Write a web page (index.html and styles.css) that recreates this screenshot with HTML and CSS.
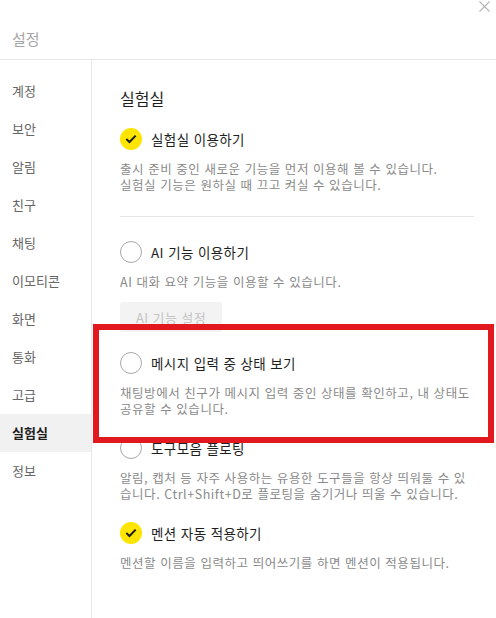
FILE: index.html
```html
<!DOCTYPE html>
<html lang="ko">
<head>
    <meta charset="UTF-8">
    <meta name="viewport" content="width=device-width, initial-scale=1.0">
    <title>설정</title>
    <link rel="stylesheet" href="styles.css">
</head>
<body>
    <div id="settings">
        <div class="header">
            <div class="closeRow">
                <svg class="closeIcon" width="11" height="11" viewBox="0 0 11 11">
                    <path d="M0.5 0.5 L10.5 10.5 M10.5 0.5 L0.5 10.5" stroke="#b4b4b4" stroke-width="1.1" fill="none"/>
                </svg>
            </div>
            <div class="title">설정</div>
        </div>
        <div class="main">
            <ul class="menu">
                <li>계정</li>
                <li>보안</li>
                <li>알림</li>
                <li>친구</li>
                <li>채팅</li>
                <li>이모티콘</li>
                <li>화면</li>
                <li>통화</li>
                <li>고급</li>
                <li class="active">실험실</li>
                <li>정보</li>
            </ul>
            <div class="content">
                <h2 class="pageTitle">실험실</h2>

                <div class="option first">
                    <span class="check on">
                        <svg width="12" height="10" viewBox="0 0 12 10"><path d="M1.3 5 L4.5 8 L10.7 1.6" stroke="#1e1e1e" stroke-width="2" fill="none"/></svg>
                    </span>
                    <span class="label">실험실 이용하기</span>
                </div>
                <p class="desc">출시 준비 중인 새로운 기능을 먼저 이용해 볼 수 있습니다.<br>실험실 기능은 원하실 때 끄고 켜실 수 있습니다.</p>

                <div class="divider"></div>

                <div class="option afterDivider">
                    <span class="check"></span>
                    <span class="label">AI 기능 이용하기</span>
                </div>
                <p class="desc">AI 대화 요약 기능을 이용할 수 있습니다.</p>
                <button class="subButton" disabled>AI 기능 설정</button>

                <div class="option">
                    <span class="check"></span>
                    <span class="label">메시지 입력 중 상태 보기</span>
                </div>
                <p class="desc">채팅방에서 친구가 메시지 입력 중인 상태를 확인하고, 내 상태도<br>공유할 수 있습니다.</p>

                <div class="option">
                    <span class="check"></span>
                    <span class="label">도구모음 플로팅</span>
                </div>
                <p class="desc">알림, 캡처 등 자주 사용하는 유용한 도구들을 항상 띄워둘 수 있<br>습니다. Ctrl+Shift+D로 플로팅을 숨기거나 띄울 수 있습니다.</p>

                <div class="option">
                    <span class="check on">
                        <svg width="12" height="10" viewBox="0 0 12 10"><path d="M1.3 5 L4.5 8 L10.7 1.6" stroke="#1e1e1e" stroke-width="2" fill="none"/></svg>
                    </span>
                    <span class="label">멘션 자동 적용하기</span>
                </div>
                <p class="desc">멘션할 이름을 입력하고 띄어쓰기를 하면 멘션이 적용됩니다.</p>
            </div>
        </div>
        <div class="highlight"></div>
    </div>
</body>
</html>
```

FILE: styles.css
```css
body, html {
    margin: 0;
    padding: 0;
    height: 100%;
    overflow: hidden;
    background-color: #fff;
    font-family: "Noto Sans CJK KR", "Noto Sans", sans-serif;
}
#settings {
    position: relative;
    width: 496px;
    height: 618px;
    display: flex;
    flex-direction: column;
}
.header {
    height: 59px;
    border-bottom: 1px solid #e6e6e6;
    display: flex;
    flex-direction: column;
    box-sizing: content-box;
}
.closeRow {
    display: flex;
    justify-content: flex-end;
    padding: 1px 6px 0 0;
    height: 18px;
}
.title {
    padding-left: 12px;
    margin-top: 10px;
    font-size: 15px;
    line-height: 20px;
    color: #a6a6a6;
}
.main {
    flex: 1;
    display: flex;
}
.menu {
    list-style: none;
    margin: 0;
    padding: 12px 0 0 0;
    width: 91px;
    border-right: 1px solid #e8e8e8;
}
.menu li {
    height: 38px;
    line-height: 38px;
    padding-left: 12px;
    font-size: 13px;
    color: #666;
}
.menu li.active {
    background-color: #f1f1f1;
    color: #1e1e1e;
    font-weight: bold;
}
.content {
    flex: 1;
    padding: 27px 0 0 28px;
}
.pageTitle {
    margin: 0;
    font-size: 16px;
    line-height: 22px;
    font-weight: normal;
    color: #1e1e1e;
}
.option {
    display: flex;
    align-items: center;
    gap: 9px;
    margin-top: 20px;
    height: 22px;
}
.option.first {
    margin-top: 19px;
}
.option.afterDivider {
    margin-top: 24px;
}
.check {
    width: 22px;
    height: 22px;
    box-sizing: border-box;
    border-radius: 50%;
    border: 1px solid #a8a8a8;
    display: flex;
    align-items: center;
    justify-content: center;
}
.check.on {
    border: none;
    background-color: #fee500;
}
.label {
    font-size: 13.5px;
    color: #1e1e1e;
    letter-spacing: 0.4px;
}
.desc {
    margin: 11px 0 0 0;
    font-size: 12.5px;
    line-height: 16px;
    color: #8a8a8a;
    letter-spacing: 0.55px;
}
.divider {
    height: 1px;
    background-color: #e6e6e6;
    width: 354px;
    margin-top: 23px;
}
.subButton {
    display: block;
    margin-top: 12px;
    width: 102px;
    height: 30px;
    border: none;
    border-radius: 3px;
    background-color: #f3f3f3;
    color: #c4c4c4;
    font-family: inherit;
    font-size: 13px;
    letter-spacing: 0.4px;
    padding: 0;
}
/* red marker over the typing-status option */
.highlight {
    position: absolute;
    left: 93px;
    top: 324px;
    width: 401px;
    height: 119px;
    box-sizing: border-box;
    border: 6px solid #e1191e;
    pointer-events: none;
}
```
